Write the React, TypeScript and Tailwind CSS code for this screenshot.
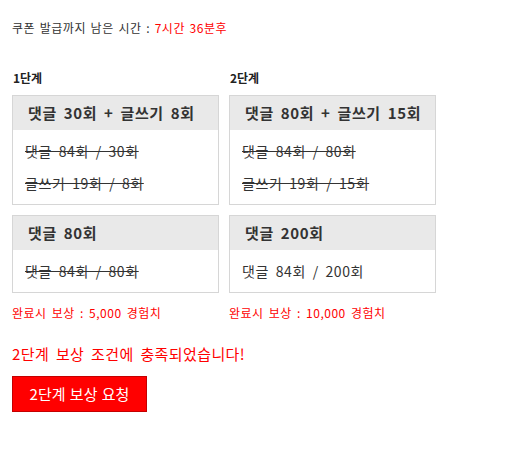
import React from "react";

const font = { fontFamily: '"Noto Sans CJK KR", "Noto Sans", sans-serif' };

type Stage = {
  label: string;
  boxes: { title: string; lines: { text: string; done: boolean }[] }[];
  reward: string;
};

const stages: Stage[] = [
  {
    label: "1단계",
    boxes: [
      {
        title: "댓글 30회 + 글쓰기 8회",
        lines: [
          { text: "댓글 84회 / 30회", done: true },
          { text: "글쓰기 19회 / 8회", done: true },
        ],
      },
      {
        title: "댓글 80회",
        lines: [{ text: "댓글 84회 / 80회", done: true }],
      },
    ],
    reward: "완료시 보상 : 5,000 경험치",
  },
  {
    label: "2단계",
    boxes: [
      {
        title: "댓글 80회 + 글쓰기 15회",
        lines: [
          { text: "댓글 84회 / 80회", done: true },
          { text: "글쓰기 19회 / 15회", done: true },
        ],
      },
      {
        title: "댓글 200회",
        lines: [{ text: "댓글 84회 / 200회", done: false }],
      },
    ],
    reward: "완료시 보상 : 10,000 경험치",
  },
];

export default function App() {
  return (
    <div className="min-h-screen bg-white px-3 pt-5 text-[#333]" style={font}>
      <p className="text-xs leading-4 tracking-[0.5px] [word-spacing:1.5px]">
        쿠폰 발급까지 남은 시간 : <span className="text-[#ff0000]">7시간 36분후</span>
      </p>

      <div className="mt-[34px] grid grid-cols-[207px_207px] gap-x-[10px]">
        {stages.map((s) => (
          <div key={s.label} className="flex flex-col">
            <div className="pl-px text-xs font-bold leading-4 text-[#222]">{s.label}</div>
            <div className="mt-[9px] flex flex-col gap-[10px]">
              {s.boxes.map((b) => (
                <div key={b.title} className="border border-[#d6d6d6]">
                  <div className="h-[34px] bg-[#e9e9e9] pl-[15px] text-[15px] font-bold leading-[34px] tracking-[0.6px] text-[#333] [word-spacing:3px]">
                    {b.title}
                  </div>
                  <div className="py-[5px] pl-3">
                    {b.lines.map((l) => (
                      <div
                        key={l.text}
                        className={`h-8 text-sm leading-8 tracking-[0.6px] text-[#333] [word-spacing:3px] ${l.done ? "line-through" : ""}`}
                      >
                        {l.text}
                      </div>
                    ))}
                  </div>
                </div>
              ))}
            </div>
            <div className="mt-3 text-xs leading-4 tracking-[0.5px] text-[#ff0000] [word-spacing:2px]">{s.reward}</div>
          </div>
        ))}
      </div>

      <p className="mt-[23px] text-[15px] leading-5 tracking-[0.4px] text-[#ff0000] [word-spacing:3px]">
        2단계 보상 조건에 충족되었습니다!
      </p>

      <button className="mt-3 h-9 w-[135px] border border-[#c40000] bg-[#ff0000] text-[15px] text-white [word-spacing:1px]">
        2단계 보상 요청
      </button>
    </div>
  );
}
